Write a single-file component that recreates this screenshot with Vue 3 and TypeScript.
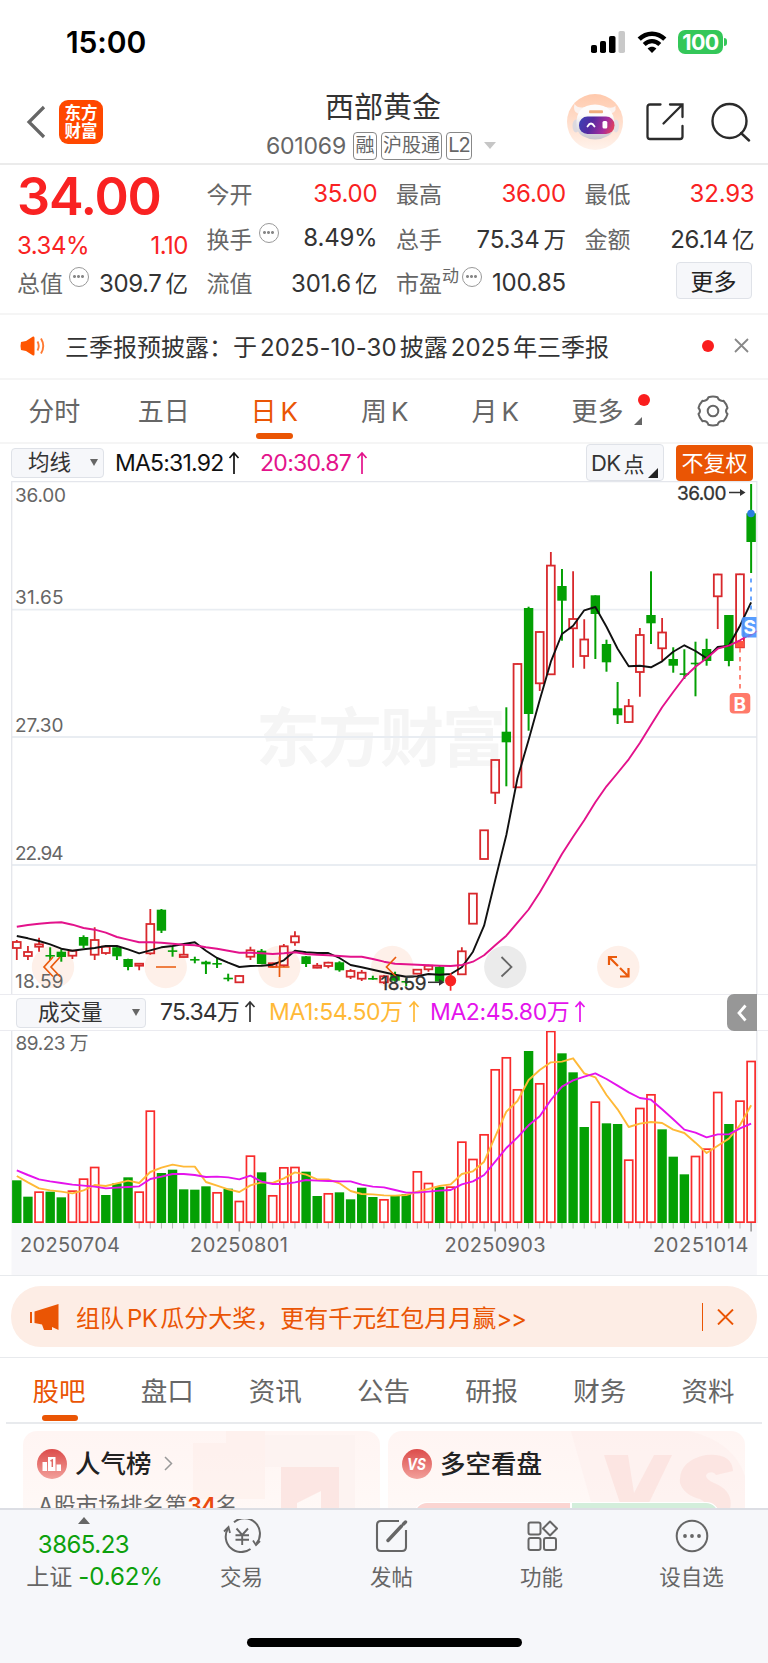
<script setup lang="ts">
type Candle = [up: number, high: number, top: number, bottom: number, low: number]

const STEP = 11.126
const cx = (i: number): number => +(16.8 + STEP * i).toFixed(2)

const candles: Candle[] = [
  [1, 940, 942, 948, 960], [1, 946, 952, 956, 960], [1, 937.7, 944.3, 946.7, 951.7], [0, 947.3, 955, 956.3, 960],
  [0, 949.3, 951.7, 957, 961.7], [1, 950, 950.7, 955.7, 959], [0, 935.3, 937, 945.7, 948], [1, 927.3, 940, 954.7, 960],
  [1, 946, 946.7, 953, 954.7], [0, 946.7, 947.3, 956.3, 960], [0, 958.7, 959, 967, 970.3], [1, 963.3, 963.7, 965.7, 970.3],
  [1, 909, 924, 953.3, 954.7], [0, 909, 909.7, 930.7, 933], [0, 946.7, 950.3, 951.7, 956.7], [1, 943.3, 954.7, 957, 957.3],
  [0, 956.7, 959, 960, 963.3], [0, 960.7, 961.7, 964.3, 974], [0, 957.7, 963, 964, 968], [0, 973.7, 977.7, 979, 981.3],
  [1, 975.3, 976, 982.3, 983], [1, 946.7, 950.3, 956.7, 960], [0, 949, 950.7, 964, 964.3], [1, 962.7, 963.3, 966.7, 967.7],
  [1, 944, 946.3, 965.3, 967], [1, 931.3, 936.3, 942.3, 945.7], [0, 956, 956.3, 964, 967], [1, 963, 965.7, 967.7, 968.3],
  [1, 961.7, 962.7, 966, 968.3], [0, 961.3, 962.3, 970.3, 971.7], [1, 969, 971, 976.7, 979], [1, 970, 972.7, 978.7, 981],
  [0, 975.7, 978, 979.3, 979.7], [1, 975, 976.3, 982.3, 984], [0, 971.7, 975, 980.7, 981.7], [0, 978.3, 981, 982.3, 986],
  [1, 969.3, 969.7, 973.7, 974.3], [1, 964.7, 965.7, 969.3, 971.7], [0, 966, 966.7, 981.7, 981.7], [1, 973.3, 978, 983, 990.7],
  [1, 947.3, 951.3, 974.3, 975], [1, 893.3, 893.6, 923.7, 924], [1, 830, 830.3, 859, 859.3], [1, 759.7, 760, 792.7, 804],
  [0, 707.3, 731.7, 742.3, 786.3], [1, 663.3, 664, 787.3, 787.3], [0, 606.7, 608, 714, 730.7], [1, 631.3, 632, 683.3, 691],
  [1, 552, 565.6, 674.3, 674.3], [0, 569, 586, 600.7, 640.7], [1, 571.3, 619, 628.3, 667.7], [1, 619.3, 639.5, 656, 668.7],
  [0, 595.3, 595.3, 614, 659], [0, 639.7, 644, 662.3, 671.7], [0, 682, 708.3, 715.3, 724], [1, 699, 706.2, 722, 722.7],
  [1, 628, 635, 672, 696.7], [0, 571.3, 615, 623.3, 644], [1, 618, 632.5, 648.3, 660.7], [0, 647.3, 659, 665.7, 672.7],
  [0, 649.3, 673.3, 674.5, 679], [0, 641.7, 662.7, 663.9, 696.3], [0, 638.7, 649, 661, 665.7], [1, 573.7, 574.5, 596.3, 629],
  [0, 615, 615, 661, 666.3], [1, 573.7, 574.3, 647.3, 647.3], [0, 484, 513.3, 542, 573],
]

const ma5 = [
  936, 938.3, 941, 944.3, 948.7, 950.7, 949.3, 948, 946, 946, 949.3, 953.3, 950.3, 947.3, 946, 944, 942.3, 950.7, 958, 962.7, 967, 966,
  965.7, 964.7, 960.3, 950.7, 952.3, 953, 953, 958, 965, 967.3, 969.7, 972.3, 974.7, 976.7, 976.3, 974, 974.7, 974, 967.3, 951.7, 925.7,
  880, 835, 778.3, 740, 700, 661.7, 634, 625.7, 610.3, 607, 626.7, 648.7, 666.3, 665.7, 667.3, 661.3, 651.7, 645.3, 651, 658.3, 647,
  645.7, 625.7, 602.3,
]
const ma20 = [
  926.7, 925, 923.7, 922.7, 922.3, 924.7, 928, 929.7, 932.7, 937, 939.7, 942.3, 942.3, 942.7, 943.7, 944.7, 945.3, 947.3, 948.7, 950.7,
  952.7, 952.7, 953.3, 954, 953.3, 952.3, 954, 954.7, 955.3, 956, 956.7, 956.7, 959, 961.7, 963.7, 964.3, 964.7, 965.3, 965.7, 966, 965,
  961.7, 955.3, 945.3, 935.7, 922.7, 909.5, 892.5, 873.5, 854, 836.7, 820.3, 802.3, 786.3, 773, 759.3, 743, 725, 707.3, 692, 677.3,
  666.7, 658.3, 648.7, 645.7, 640.3, 633.7,
]

/* Volume geometry is kept in thirds of a pixel below the panel origin. */
const VOL_BASE = 608
const volTop = [
  481, 530, 515, 515, 532, 512, 476, 441, 525, 490, 472, 515, 272, 459, 449, 508, 509, 499, 517, 506, 543, 407, 457, 526, 442, 441, 455,
  528, 520, 517, 538, 503, 531, 538, 526, 522, 454, 489, 501, 500, 365, 417, 343, 148, 112, 208, 93, 190, 33, 100, 157, 321, 245, 310,
  312, 419, 264, 223, 328, 410, 463, 408, 386, 216, 312, 242, 123,
]
const volGreen = new Set([
  0, 1, 3, 4, 8, 9, 10, 13, 14, 15, 16, 17, 19, 22, 26, 27, 29, 30, 31, 32, 34, 35, 38, 46, 49, 50, 51, 53, 54, 58, 59, 60, 64,
])
const volMa1 = [
  468, 487, 505, 511, 515, 520, 511, 495, 498, 490, 482, 489, 456, 443, 434, 440, 440, 486, 497, 508, 516, 496, 487, 489, 475, 457, 464,
  478, 478, 490, 513, 522, 523, 526, 527, 525, 515, 507, 498, 493, 462, 454, 425, 350, 275, 243, 180, 150, 127, 125, 115, 160, 172, 225,
  268, 321, 311, 306, 309, 329, 339, 368, 399, 377, 356, 315, 256,
]
const volMa2 = [
  451, 465, 478, 484, 489, 494, 497, 500, 505, 503, 501, 499, 477, 470, 462, 462, 465, 471, 470, 472, 478, 467, 485, 492, 492, 487, 480,
  482, 483, 484, 484, 494, 500, 502, 510, 518, 518, 515, 512, 510, 493, 484, 465, 425, 384, 352, 316, 289, 240, 200, 181, 170, 160, 177,
  197, 217, 234, 239, 268, 298, 329, 338, 352, 343, 343, 325, 311,
]

const vy = (v: number): number => +(1020 + v / 3).toFixed(2)
const line = (ys: number[]): string => ys.map((y, i) => `${cx(i)},${y}`).join(' ')
const ticks = Array.from({ length: 56 }, (_, k) => k + 11)
const major = new Set([20, 43, 66])

const priceLabels = [
  { t: '36.00', y: 501.5 }, { t: '31.65', y: 604 }, { t: '27.30', y: 732 }, { t: '22.94', y: 860 }, { t: '18.59', y: 988 },
]
const dates = [
  { t: '20250704', x: 20, w: 100 }, { t: '20250801', x: 190, w: 98 }, { t: '20250903', x: 444.5, w: 101 }, { t: '20251014', x: 653, w: 95.5 },
]
const periods = ['分时', '五日', '日K', '周K', '月K']
const sections = ['股吧', '盘口', '资讯', '公告', '研报', '财务', '资料']
</script>

<template>
  <div class="app">
    <div class="status">
      <span class="time">15:00</span>
      <div class="status-icons">
        <svg class="signal" width="34" height="22" viewBox="0 0 34 22">
          <rect x="0" y="14" width="6" height="8" rx="1.8" />
          <rect x="9" y="10" width="6" height="12" rx="1.8" />
          <rect x="18" y="5" width="6.5" height="17" rx="1.8" />
          <rect x="27.5" y="0" width="6.5" height="22" rx="1.8" fill="#c9c9c9" />
        </svg>
        <svg class="wifi" width="30" height="22" viewBox="0 0 30 22">
          <path d="M2.2 8.2C9.6 1 20.4 1 27.8 8.2" fill="none" stroke="#000" stroke-width="4.6" />
          <path d="M7.2 13.4C11.8 9 18.2 9 22.8 13.4" fill="none" stroke="#000" stroke-width="4.2" />
          <path d="M15 22L10.6 17.4C13.2 15.2 16.8 15.2 19.4 17.4Z" />
        </svg>
        <div class="battery">100</div>
        <i class="nub"></i>
      </div>
    </div>

    <header class="head">
      <div class="head-left">
        <svg width="20" height="34" viewBox="0 0 20 34"><path d="M18 2L3 17L18 32" fill="none" stroke="#666" stroke-width="3.2" /></svg>
        <div class="logo"><span>东方</span><span>财富</span></div>
      </div>
      <div class="title">
        <div class="name">西部黄金</div>
        <div class="code">
          <span class="num">601069</span><b>融</b><b class="wide">沪股通</b><b class="l2">L2</b><i class="caret"></i>
        </div>
      </div>
      <div class="head-right">
        <svg width="56" height="56" viewBox="0 0 56 56">
          <defs>
            <linearGradient id="halo" x1="0" y1="0" x2="0" y2="1"><stop offset="0" stop-color="#ffc9ac" /><stop offset="1" stop-color="#fff3ec" /></linearGradient>
            <linearGradient id="visor" x1="0" y1="0.3" x2="1" y2="0.5"><stop offset="0" stop-color="#3d40b4" /><stop offset=".35" stop-color="#552aa0" /><stop offset=".75" stop-color="#a52d9c" /><stop offset="1" stop-color="#e0405e" /></linearGradient>
            <linearGradient id="shell" x1="0" y1="0" x2="0" y2="1"><stop offset=".3" stop-color="#fdfcfc" /><stop offset="1" stop-color="#c9c6ce" /></linearGradient>
          </defs>
          <circle cx="28" cy="28" r="28" fill="url(#halo)" />
          <path d="M15 20Q5 20 7.500 10Q11 15 18 13ZM40 20Q50 20 48.500 12Q46 15 38 13Z" fill="#fbf3f0" />
          <ellipse cx="9" cy="32" rx="3.500" ry="6.500" fill="#dcd9df" />
          <ellipse cx="49" cy="32" rx="3" ry="6.500" fill="#e2dfe4" />
          <path d="M9.500 30Q9 11 28 10.500Q47 11 47.500 30Q48 38 41 42Q28 49 15.500 42Q9 38 9.500 30Z" fill="url(#shell)" />
          <rect x="22" y="16.200" width="14" height="3" rx="1" fill="#f0ad7c" />
          <rect x="12" y="22.500" width="35.500" height="17.500" rx="8.500" fill="url(#visor)" />
          <path d="M20.500 32.500Q24 26.500 27.500 32.500" fill="none" stroke="#fff" stroke-width="1.800" stroke-linecap="round" />
          <rect x="35.500" y="27" width="4.800" height="7.500" rx="1.500" fill="#fff" />
        </svg>
        <svg class="share" width="38" height="38" viewBox="0 0 38 38" fill="none" stroke="#2b2b2b" stroke-width="2.3" stroke-linecap="round">
          <path d="M14.500 1.500H4Q1.500 1.500 1.500 4V33.500Q1.500 36 4 36H34Q36.500 36 36.500 33.500V23M17.500 20.500L35.500 2.500M24 1.500H36.500V14" />
        </svg>
        <svg class="search" width="40" height="40" viewBox="0 0 40 40" fill="none" stroke="#2b2b2b" stroke-width="2.4">
          <circle cx="18.500" cy="19" r="17" /><path d="M30 31L38 38.500" stroke-linecap="round" />
        </svg>
      </div>
    </header>

    <section class="quote">
      <div class="q-price">
        <div class="last">34.00</div>
        <div class="chg red"><span>3.34%</span><span>1.10</span></div>
        <div class="cell"><label>总值</label><i class="tip"></i><span class="v">309.7<u>亿</u></span></div>
      </div>
      <div class="q-col">
        <div class="cell"><label>今开</label><span class="v red">35.00</span></div>
        <div class="cell"><label>换手</label><i class="tip"></i><span class="v">8.49%</span></div>
        <div class="cell"><label>流值</label><span class="v">301.6<u>亿</u></span></div>
      </div>
      <div class="q-col">
        <div class="cell"><label>最高</label><span class="v red">36.00</span></div>
        <div class="cell"><label>总手</label><span class="v">75.34<u>万</u></span></div>
        <div class="cell"><label>市盈<sup>动</sup></label><i class="tip near"></i><span class="v">100.85</span></div>
      </div>
      <div class="q-col">
        <div class="cell"><label>最低</label><span class="v red">32.93</span></div>
        <div class="cell"><label>金额</label><span class="v">26.14<u>亿</u></span></div>
        <div class="cell end"><button class="more">更多</button></div>
      </div>
    </section>

    <section class="news">
      <svg width="25" height="22" viewBox="0 0 25 22">
        <path d="M1 7Q0 11 1 15L6 16L13 20.5Q14.5 21 14.5 19V3Q14.5 1 13 1.5L6 6Z" fill="#ff5500" />
        <path d="M17.5 6.5Q20 11 17.5 15.5M21 3.5Q25.5 11 21 18.5" fill="none" stroke="#ff7a33" stroke-width="1.9" />
      </svg>
      <p>三季报预披露：于<em>2025-10-30</em>披露<em>2025</em>年三季报</p>
      <i class="dot"></i>
      <svg class="x" width="15" height="15" viewBox="0 0 15 15"><path d="M1 1L14 14M14 1L1 14" stroke="#888" stroke-width="1.8" /></svg>
    </section>

    <nav class="periods">
      <span v-for="(p, i) in periods" :key="p" :class="{ on: i === 2 }">{{ p[0] }}<em :class="{ k: p[1] === 'K' }">{{ p[1] }}</em></span>
      <span class="mo">更多<i class="dot"></i><i class="tri"></i></span>
      <span class="gear">
        <svg width="32" height="32" viewBox="0 0 32 32" fill="none" stroke="#666" stroke-width="2">
          <path d="M11.500 2.200Q16 .8 20.500 2.200Q22 6.500 26.500 5.800Q29.500 9 30.500 13Q27.500 16 30.500 19Q29.500 23 26.500 26.200Q22 25.500 20.500 29.800Q16 31.200 11.500 29.800Q10 25.500 5.500 26.200Q2.500 23 1.500 19Q4.500 16 1.500 13Q2.500 9 5.500 5.800Q10 6.500 11.500 2.200Z" stroke-linejoin="round" />
          <circle cx="16" cy="16" r="5.3" />
        </svg>
      </span>
    </nav>

    <div class="ma-row">
      <div class="select s1">均线<i class="down"></i></div>
      <span class="m5">MA5:31.92<svg width="12" height="24" viewBox="0 0 12 24"><path d="M6 23V2M1.5 7L6 2L10.5 7" /></svg></span>
      <span class="m20">20:30.87<svg width="12" height="24" viewBox="0 0 12 24"><path d="M6 23V2M1.5 7L6 2L10.5 7" /></svg></span>
      <div class="dk">DK<span>点</span><i></i></div>
      <div class="adj">不复权</div>
    </div>

    <svg class="price" width="768" height="513" viewBox="0 481 768 513">
      <text class="mark" x="256" y="761" textLength="250">东方财富</text>
      <path d="M11.5 609.7H757M11.5 737H757M11.5 865H757" stroke="#e9edf2" stroke-width="1.8" />
      <path d="M11.7 994V481.7H756.8V994" fill="none" stroke="#e4e6ec" stroke-width="1.3" />

      <g class="floats">
        <circle v-for="x in [53, 165.7, 279.3, 392.3, 618.3]" :key="x" :cx="x" cy="967" r="21.2" fill="#fef0e9" />
        <circle cx="505.3" cy="967" r="21.2" fill="#ebebeb" />
      </g>
      <text v-for="p in priceLabels" :key="p.t" class="axis" x="15" :y="p.y" :textLength="p.t === '36.00' ? 51 : 48.5">{{ p.t }}</text>

      <g v-for="(c, i) in candles" :key="i" :class="c[0] ? 'up' : 'dn'">
        <template v-if="i !== 39">
          <path v-if="c[0]" :d="`M${cx(i)} ${c[1]}V${c[2]}M${cx(i)} ${c[3]}V${c[4]}`" />
          <path v-else :d="`M${cx(i)} ${c[1]}V${c[4]}`" />
          <rect :x="cx(i) - (c[0] ? 3.9 : 4.7)" :y="c[2]" :width="c[0] ? 7.8 : 9.4" :height="Math.max(c[3] - c[2], 1.6)" />
        </template>
      </g>
      <rect x="735.9" y="641" width="8.2" height="6.5" fill="#ff5240" />

      <polyline :points="line(ma5)" fill="none" stroke="#111" stroke-width="1.9" stroke-linejoin="round" />
      <polyline :points="line(ma20)" fill="none" stroke="#e3128b" stroke-width="1.9" stroke-linejoin="round" />

      <g fill="none" stroke="#ea5a0c" stroke-width="1.7">
        <path d="M53 957L44 967L53 976.500M60 957L51 967L60 976.500" />
        <path d="M156 967H176M269.500 967H289.500M279.500 956.500V977" />
        <path d="M396 957L386.500 967L396 976.500" />
        <path d="M618 966L609 957M609 965V957H617M620 968L628 976M620 976.500H628.500V968" stroke-width="2.2" />
      </g>
      <path d="M501.500 957L511.500 967L501.500 976.500" fill="none" stroke="#666" stroke-width="1.8" />

      <path d="M450.600 973V990.700" stroke="#f92222" stroke-width="1.7" />
      <circle cx="450.600" cy="980.700" r="5.600" fill="#f92222" />
      <text class="pt" x="380.500" y="989.5" textLength="46">18.59</text>
      <path d="M428 982.300H439" stroke="#333" stroke-width="1.5" /><path d="M439 978.800L444.500 982.300L439 985.800Z" fill="#333" />
      <text class="pt" x="677" y="499.5" textLength="49.5">36.00</text>
      <path d="M729 492.500H740" stroke="#333" stroke-width="1.5" /><path d="M740 489L745.500 492.500L740 496Z" fill="#333" />

      <circle cx="751" cy="513.500" r="3.800" fill="#2b7de0" />
      <path d="M751 578.500V612" stroke="#5a9cff" stroke-width="1.8" stroke-dasharray="4 5" />
      <path d="M740 648V690" stroke="#ff7a6a" stroke-width="1.8" stroke-dasharray="4.500 4.500" />
      <path d="M744.500 617H756.500V637.500H744.500Q741.500 637.500 741.500 634.500V620Q741.500 617 744.500 617Z" fill="#4a96ff" fill-opacity=".92" />
      <path d="M748 637L757 631" stroke="#e3128b" stroke-opacity=".3" stroke-width="1.500" />
      <text class="sig" x="743.500" y="634">S</text>
      <rect x="729.700" y="693" width="20.600" height="20.600" rx="4" fill="#ff7a6a" />
      <text class="sig" x="733.500" y="710.5">B</text>
    </svg>

    <div class="vol-row">
      <div class="select s2">成交量<i class="down"></i></div>
      <span class="v0">75.34万<svg width="12" height="24" viewBox="0 0 12 24"><path d="M6 22V2M1.500 7L6 2L10.500 7" /></svg></span>
      <span class="v1">MA1:54.50万<svg width="12" height="24" viewBox="0 0 12 24"><path d="M6 22V2M1.500 7L6 2L10.500 7" /></svg></span>
      <span class="v2">MA2:45.80万<svg width="12" height="24" viewBox="0 0 12 24"><path d="M6 22V2M1.500 7L6 2L10.500 7" /></svg></span>
      <div class="fold"><svg width="10" height="18" viewBox="0 0 10 18"><path d="M8.500 1.500L2 9L8.500 16.500" fill="none" stroke="#fff" stroke-width="2.800" /></svg></div>
    </div>

    <svg class="volume" width="768" height="244" viewBox="0 1031 768 244">
      <rect x="11.500" y="1223" width="745.300" height="52" fill="#f7f7fa" />
      <path d="M11.700 1223V1031M756.800 1031V1223" fill="none" stroke="#e4e6ec" stroke-width="1.300" />
      <text class="axis" x="15.500" y="1049.500" textLength="50">89.23</text>
      <text class="axis" x="69.500" y="1049.500" textLength="17">万</text>
      <template v-for="(t, i) in volTop" :key="i">
        <rect v-if="volGreen.has(i)" :x="cx(i) - 4.700" :y="vy(t)" width="9.400" :height="(VOL_BASE + 1 - t) / 3" fill="#04a004" />
        <rect v-else :x="cx(i) - 4" :y="vy(t) + 0.500" width="8" :height="(VOL_BASE - t) / 3 - 1" fill="#fff" stroke="#f92b2b" stroke-width="1.700" />
      </template>
      <polyline :points="line(volMa1.map(vy))" fill="none" stroke="#ffb937" stroke-width="1.900" stroke-linejoin="round" />
      <polyline :points="line(volMa2.map(vy))" fill="none" stroke="#e413ec" stroke-width="1.900" stroke-linejoin="round" />
      <path v-for="i in ticks" :key="i" :d="`M${cx(i)} 1223V${major.has(i) ? 1231.500 : 1228.500}`" :stroke="major.has(i) ? '#999' : '#b5b5b5'" :stroke-width="major.has(i) ? 1.600 : 1" />
      <text v-for="d in dates" :key="d.t" class="axis date" :x="d.x" y="1252" :textLength="d.w">{{ d.t }}</text>
    </svg>

    <section class="promo">
      <div class="banner">
        <svg width="29" height="26" viewBox="0 0 29 26" fill="#ea5504">
          <rect x="0" y="8" width="2" height="11" /><path d="M4.500 7.500L28.500 0V26L22 23V26H14L12 20.500L4.500 19Z" />
        </svg>
        <p>组队<em>PK</em>瓜分大奖，更有千元红包月月赢<em class="gt">&gt;&gt;</em></p>
        <i class="bar"></i>
        <svg width="17" height="16" viewBox="0 0 17 16"><path d="M1 .5L16 15.500M16 .5L1 15.500" stroke="#ea5504" stroke-width="1.900" /></svg>
      </div>
    </section>

    <nav class="sections">
      <span v-for="(s, i) in sections" :key="s" :class="{ on: i === 0 }">{{ s }}</span>
    </nav>

    <section class="cards">
      <div class="card">
        <svg class="deco" width="357" height="78" viewBox="0 0 357 78">
          <path d="M203 0H242V68H170V12H203Z" fill="#fdeae7" fill-opacity=".4" />
          <path d="M242 4H332V78H316V36H242Z" fill="#fdf3f1" />
          <path d="M258 36H316V78H298V60L274 72V78H258ZM221 88V88H247V88H221Z" fill="#fbe0dc" fill-opacity=".75" />
          <path d="M221 88H247V78H221Z" fill="#fbe4e1" />
        </svg>
        <div class="card-title">
          <svg width="30" height="30" viewBox="0 0 30 30">
            <defs><linearGradient id="badge" x1="0" y1="0" x2="0" y2="1"><stop offset="0" stop-color="#dc4c4a" /><stop offset="1" stop-color="#f2a09b" /></linearGradient></defs>
            <circle cx="15" cy="15" r="15" fill="url(#badge)" />
            <path d="M5.500 13H10V22H5.500ZM11 8H18.500V22H11ZM19.500 15.500H24V22H19.500Z" fill="#fff" />
            <path d="M13.500 12L15.300 11V18" fill="none" stroke="#e06a66" stroke-width="1.500" />
          </svg>
          <strong>人气榜</strong>
          <svg width="9" height="15" viewBox="0 0 9 15"><path d="M1 1L7.500 7.500L1 14" fill="none" stroke="#999" stroke-width="1.500" /></svg>
        </div>
        <p class="rank">A股市场排名第<b>34</b>名</p>
      </div>
      <div class="card">
        <svg class="deco" width="357" height="78" viewBox="0 0 357 78">
          <path d="M183 0H300Q345 10 357 45V78H205Z" fill="#fdeeeb" fill-opacity=".5" />
          <path d="M216 24H240L246 62L266 24H284L258 78H234Z" fill="#fbe0dc" fill-opacity=".7" />
          <path d="M345 40Q344 22 318 24Q290 30 292 52Q296 64 312 68Q320 72 318 78H342Q346 60 326 52Q314 46 320 42Q326 40 328 44Z" fill="#fbe0dc" fill-opacity=".7" />
        </svg>
        <div class="card-title">
          <svg width="30" height="30" viewBox="0 0 30 30">
            <circle cx="15" cy="15" r="15" fill="url(#badge)" />
            <text x="5" y="21" class="vs" textLength="19" lengthAdjust="spacingAndGlyphs">VS</text>
          </svg>
          <strong>多空看盘</strong>
        </div>
        <div class="ratio"><i class="long"></i><i class="short"></i></div>
      </div>
    </section>

    <footer class="dock">
      <div class="dock-items">
        <div class="index"><i class="up-tri"></i><span class="g">3865.23</span><div>上证<span class="g">-0.62%</span></div></div>
        <div class="act">
          <svg width="38" height="34" viewBox="0 0 38 34" fill="none" stroke="#666" stroke-width="2">
            <path d="M11 3.300A15.500 15.500 0 0 1 33.500 24.500M27.500 30A15.500 15.500 0 0 1 5 9.500" />
            <path d="M1 12.500L5.500 8L7 14M37 22L33 26L30 21.500" stroke-width="1.800" />
            <path d="M13.500 9.500L19.200 16L25 9.500M12.500 16.200H26M12.500 20.800H26M19.200 16V26" stroke-width="1.900" />
          </svg><span>交易</span>
        </div>
        <div class="act">
          <svg width="34" height="34" viewBox="0 0 34 34" fill="none" stroke="#666" stroke-width="2.100">
            <path d="M24 2H6Q2 2 2 6V28Q2 32 6 32H27Q31 32 31 28V11" />
            <path d="M13 21.500L26.500 7" stroke-width="3.400" stroke-linecap="round" /><path d="M28.500 5L30.500 3" stroke-width="3.400" stroke-linecap="round" />
          </svg><span>发帖</span>
        </div>
        <div class="act">
          <svg width="32" height="32" viewBox="0 0 32 32" fill="none" stroke="#666" stroke-width="2">
            <rect x="2.500" y="2.500" width="12" height="12" rx="2" /><rect x="2.500" y="18" width="12" height="12" rx="2" /><rect x="18" y="18" width="12" height="12" rx="2" />
            <path d="M24 1.500L31 8.500L24 15.500L17 8.500Z" stroke-linejoin="round" />
          </svg><span>功能</span>
        </div>
        <div class="act">
          <svg width="34" height="34" viewBox="0 0 34 34">
            <circle cx="17" cy="17" r="15.300" fill="none" stroke="#666" stroke-width="2" />
            <g fill="#666"><circle cx="10" cy="17" r="1.900" /><circle cx="17" cy="17" r="1.900" /><circle cx="24" cy="17" r="1.900" /></g>
          </svg><span>设自选</span>
        </div>
      </div>
      <div class="home"></div>
    </footer>
  </div>
</template>

<style>
body { margin: 0; background: #fff; }
</style>

<style scoped>
.app { width: 768px; height: 1663px; overflow: hidden; background: #fff; color: #333; font-family: Inter, "Noto Sans CJK SC", sans-serif; display: flex; flex-direction: column; }
.app > * { flex: none; box-sizing: border-box; }
svg { display: block; flex: none; }
i, em { font-style: normal; }
p { margin: 0; white-space: nowrap; }
.red { color: #f92222; }

.status { height: 84px; padding: 0 41px 0 66px; display: flex; justify-content: space-between; align-items: center; }
.time { font-size: 30px; font-weight: 600; color: #000; letter-spacing: -0.1px; }
.status-icons { display: flex; align-items: center; }
.wifi { margin-left: 12px; }
.battery { margin-left: 11px; width: 45px; height: 24px; border-radius: 7px; background: #34c759; color: #fff; font-size: 21.500px; line-height: 24px; font-weight: 700; text-align: center; letter-spacing: -0.6px; }
.nub { width: 3px; height: 8px; margin-left: 1px; border-radius: 0 3px 3px 0; background: #34c759; }

.head { height: 81px; border-bottom: 2px solid #ebebeb; display: grid; grid-template-columns: 230px 1fr 230px; }
.head-left { display: flex; align-items: center; padding: 0 0 3px 26px; gap: 13px; }
.logo { width: 44px; height: 44px; box-sizing: border-box; padding-top: 4px; border-radius: 9px; background: #ff4800; color: #fff; font-size: 16.500px; line-height: 18px; font-weight: 700; display: flex; flex-direction: column; align-items: center; }
.name { font-size: 29px; line-height: 34px; margin: 7px 2px 0 0; text-align: center; color: #333; }
.code { display: flex; align-items: center; margin: 6px 0 0 36px; color: #666; height: 29px; }
.num { font-size: 23px; letter-spacing: -0.2px; width: 87px; }
.code b { width: 24px; height: 28px; box-sizing: border-box; border: 1.500px solid #888; border-radius: 4px; font-size: 19px; line-height: 25px; font-weight: 400; text-align: center; margin-right: 4px; white-space: nowrap; }
.code b.wide { width: 61px; }
.code b.l2 { width: 26px; font-size: 20px; letter-spacing: -1px; }
.caret { margin-left: 8px; border: 6.500px solid transparent; border-top: 7.500px solid #c6c6c6; border-bottom: 0; }
.head-right { display: flex; align-items: center; padding: 0 0 3px 29px; }
.share { margin-left: 23px; }
.search { margin-left: 27px; }

.quote { height: 150px; border-bottom: 2px solid #f5f5f5; padding: 6px 13px 0 17px; display: grid; grid-template-columns: 171px 171px 170px 170px; column-gap: 18.500px; }
.last { height: 51px; line-height: 52px; font-size: 52px; font-weight: 600; color: #f92222; letter-spacing: -1.200px; }
.chg { display: flex; justify-content: space-between; height: 38px; line-height: 47px; font-size: 24px; letter-spacing: -0.5px; }
.cell { height: 44.500px; display: flex; align-items: center; position: relative; }
.cell label { font-size: 23px; color: #666; white-space: nowrap; }
.cell sup { font-size: 17px; line-height: 0; vertical-align: 10px; }
.v { margin-left: auto; font-size: 24px; letter-spacing: -0.2px; white-space: nowrap; }
.v u { text-decoration: none; margin-left: 4px; font-size: 22.500px; letter-spacing: 0; }
.q-price, .q-col { min-width: 0; }
.q-price .v { letter-spacing: -0.4px; }
.tip { width: 20px; height: 20px; box-sizing: border-box; border: 1.500px solid #999; border-radius: 50%; margin: -10px 0 0 6px; background: radial-gradient(circle at 4.500px 8.500px, #888 1.200px, transparent 1.700px), radial-gradient(circle at 8.500px 8.500px, #888 1.200px, transparent 1.700px), radial-gradient(circle at 12.500px 8.500px, #888 1.200px, transparent 1.700px); }
.tip.near { margin-left: 3px; }
.cell.end { justify-content: flex-end; padding-right: 3px; }
.more { width: 76px; height: 37px; margin-top: -4px; padding: 0; border: 1.500px solid #dfe2e8; border-radius: 4px; background: #f6f7fa; font: 23px Inter, "Noto Sans CJK SC", sans-serif; color: #222; }

.news { height: 65px; border-bottom: 2px solid #f5f5f5; display: flex; align-items: center; padding: 0 19px 2px 20px; }
.news p { margin-left: 20px; font-size: 24px; flex: 1; }
.news em { margin: 0 3px; letter-spacing: 0.1px; }
.dot { width: 12px; height: 12px; border-radius: 50%; background: #fa1e1e; }
.x { margin-left: 20px; }

.periods { height: 64px; border-bottom: 2px solid #f5f5f5; display: grid; grid-template-columns: repeat(7, 110.500px); }
.periods span { position: relative; font-size: 26px; line-height: 63px; color: #666; text-align: center; white-space: nowrap; }
.periods em.k { margin-left: 4px; }
.periods span.on, .sections span.on { color: #ea5504; }
.periods .on::after { content: ""; position: absolute; left: 37px; bottom: 4px; width: 37px; height: 6px; border-radius: 3px; background: #ea5504; }
.periods span:nth-child(1) { left: -1px; }
.periods span:nth-child(n + 2) { left: -2px; }
.periods .mo { text-align: left; padding-left: 21px; }
.mo .dot { position: absolute; left: 87px; top: 14px; }
.mo .tri { position: absolute; left: 83px; top: 37px; border: 4px solid #666; border-left-color: transparent; border-top-color: transparent; }
.periods span.gear { display: flex; align-items: center; justify-content: center; padding-bottom: 1px; left: -5px; }

.ma-row { height: 37px; display: flex; align-items: center; padding: 0 15px 0 11px; white-space: nowrap; }
.select { box-sizing: border-box; height: 30px; border: 1.500px solid #dfe2e8; border-radius: 4px; background: #f6f7fa; font-size: 21.500px; line-height: 27px; display: flex; align-items: center; justify-content: space-between; }
.s1 { width: 93px; padding: 0 5px 0 16px; }
.s2 { width: 130px; padding: 0 5px 0 21px; }
.down { border: 4.500px solid transparent; border-top: 7.500px solid #666; border-bottom: 0; }
.ma-row > span, .vol-row > span { display: flex; align-items: center; font-size: 23px; }
.ma-row span svg, .vol-row span svg { fill: none; stroke: currentColor; stroke-width: 1.700; margin-left: 5px; }
.m5 { margin-left: 11px; width: 145px; color: #111; letter-spacing: -0.8px; }
.m20 { color: #e3128b; letter-spacing: -0.7px; }
.dk { margin-left: auto; width: 78px; height: 37px; box-sizing: border-box; border: 1.500px solid #dfe2e8; border-radius: 4px; background: #f6f7fa; display: flex; align-items: center; padding-left: 4px; font-size: 22px; letter-spacing: -0.6px; position: relative; }
.dk span { margin-left: 3px; font-size: 21px; }
.dk i { position: absolute; right: 5px; bottom: 2px; border: 5.500px solid #222; border-left-color: transparent; border-top-color: transparent; }
.adj { margin-left: 12px; width: 77px; height: 36px; border-radius: 4px; background: #ea5504; color: #fff; font-size: 22px; line-height: 36px; text-align: center; }

.mark { font-size: 64px; font-weight: 700; fill: #f5f5f5; }
.axis { font-size: 19px; fill: #666; }
.date { font-size: 20px; }
.pt { font-size: 19px; fill: #333; stroke: #333; stroke-width: .3px; }
.sig { font-size: 19px; font-weight: 700; fill: #fff; }
.up path, .up rect { stroke: #d8282c; stroke-width: 1.800px; fill: none; }
.up rect { fill: #fff; fill-opacity: .6; }
.dn path { stroke: #04a004; stroke-width: 2px; }
.dn rect { fill: #04a004; }

.vol-row { height: 37px; border: solid #ebebf0; border-width: 1.500px 0; display: flex; align-items: center; padding: 0 11px 0 16px; white-space: nowrap; }
.vol-row > span { letter-spacing: -0.4px; line-height: 32px; padding-bottom: 1px; }
.v0 { margin-left: 14px; width: 109px; color: #333; }
.vol-row .v0 { letter-spacing: -0.9px; }
.v1 { width: 161px; color: #ffb937; }
.v2 { color: #e413ec; }
.fold { margin-left: auto; width: 30px; height: 37px; border-radius: 7px 0 0 7px; background: #979797; display: flex; align-items: center; justify-content: center; }

.promo { height: 82.500px; border: solid #e8eaed; border-width: 1.500px 0; padding: 10px 11px 0; }
.banner { height: 61px; border-radius: 30px; background: #fdede5; color: #ea5504; display: flex; align-items: center; padding: 0 23px 0 19px; }
.banner p { margin-left: 17px; font-size: 24px; flex: 1; }
.banner em { margin: 0 3px; letter-spacing: -0.6px; }
.banner em.gt { margin: 0; letter-spacing: -1.200px; }
.bar { width: 1.500px; height: 28px; background: #ea5504; margin-right: 14px; }

.sections { height: 66px; margin: 0 6px; border-bottom: 2px solid #e8eaed; display: grid; grid-template-columns: repeat(7, 108.150px); }
.sections span { position: relative; left: -1px; font-size: 26.500px; line-height: 66px; text-align: center; color: #666; }
.sections .on::after { content: ""; position: absolute; left: 37px; bottom: 3px; width: 36px; height: 6px; border-radius: 3px; background: #ea5504; }

.cards { height: 84.500px; padding: 7px 22px 0 23px; display: grid; grid-template-columns: 357px 357px; gap: 8px; overflow: hidden; }
.card { position: relative; height: 110px; border-radius: 14px; background: linear-gradient(#fff5f3, #fffaf8); overflow: hidden; }
.deco { position: absolute; left: 0; top: 0; }
.card-title { position: relative; display: flex; align-items: center; padding: 17px 0 0 14px; height: 32px; }
.card-title strong { margin: 0 12px 0 8px; font-size: 25.500px; font-weight: 500; line-height: 32px; color: #222; }
.rank { position: relative; margin: 10px 0 0 15px; font-size: 22.300px; line-height: 32px; color: #666; }
.rank b { color: #ea4a10; font-weight: 600; font-size: 23px; letter-spacing: -0.8px; }
.vs { font-size: 16px; font-weight: 700; font-style: italic; fill: #fff; }
.ratio { position: relative; margin: 22px 26px 0; display: flex; gap: 2px; background: #fff; border: 1.500px solid #fff; border-radius: 12px 12px 0 0; }
.ratio i { height: 30px; }
.long { width: 155px; background: #fbd5d2; border-radius: 12px 0 0 0; }
.short { flex: 1; background: #d3eedb; border-radius: 0 12px 0 0; }

.dock { height: 155px; background: #f6f7fa; border-top: 2px solid #dcdee4; color: #666; }
.dock-items { display: grid; grid-template-columns: 166.500px 150px 150px 150px 150px; height: 128px; }
.index { display: flex; flex-direction: column; align-items: center; font-size: 23px; width: 167px; box-sizing: border-box; }
.index .g { color: #0ca00c; font-size: 24px; letter-spacing: -0.5px; }
.index > .g { line-height: 30px; margin-top: 6px; }
.index div { line-height: 34px; white-space: nowrap; display: flex; gap: 6px; margin-left: 22px; }
.index div .g { letter-spacing: -0.1px; }
.up-tri { margin-top: 7px; border: 6.500px solid transparent; border-bottom: 7px solid #666; border-top: 0; }
.act { display: flex; flex-direction: column; align-items: center; justify-content: flex-start; padding-top: 9px; font-size: 21.500px; }
.act svg { height: 34px; }
.act span { line-height: 32px; margin-top: 8px; }
.home { width: 275px; height: 9px; border-radius: 5px; background: #000; margin: 0 auto; }
</style>
